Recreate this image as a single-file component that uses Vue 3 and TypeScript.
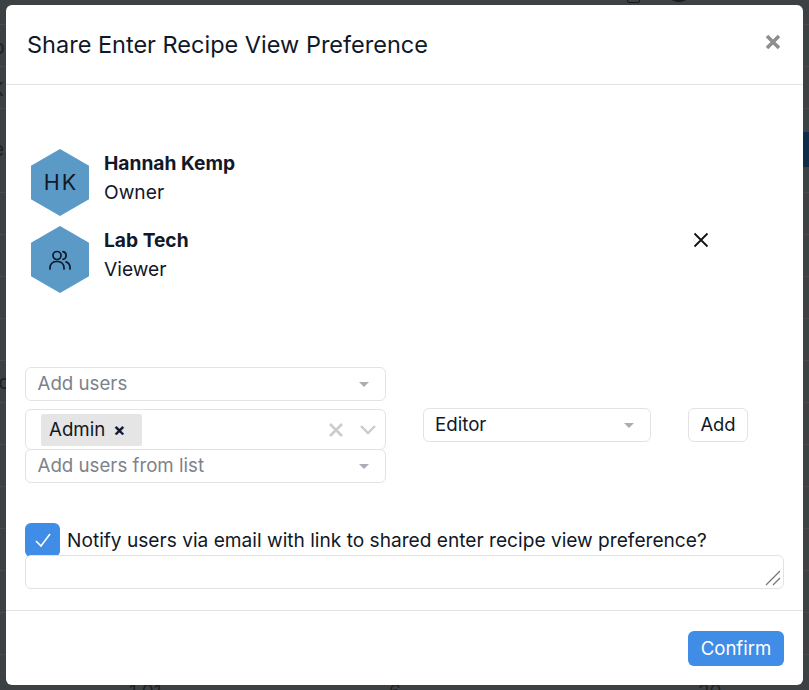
<script setup lang="ts">
interface Member {
  name: string
  role: string
  initials?: string
  removable?: boolean
}

const members: Member[] = [
  { name: 'Hannah Kemp', role: 'Owner', initials: 'HK' },
  { name: 'Lab Tech', role: 'Viewer', removable: true },
]
</script>

<template>
  <div class="backdrop">
    <!-- what shows of the page behind the overlay -->
    <div class="behind">
      <span class="frag f-b">b</span>
      <span class="frag f-k">K</span>
      <span class="frag f-e">e</span>
      <span class="frag f-ic">ic</span>
      <span class="frag f-101">1.01</span>
      <span class="frag f-6">6</span>
      <span class="frag f-20">20</span>
      <i class="top-icon"></i>
      <i class="top-blob"></i>
      <i class="blue-row"></i>
    </div>

    <div class="modal">
      <header class="modal-head">
        <h2>Share Enter Recipe View Preference</h2>
        <button class="close" aria-label="Close">
          <svg viewBox="0 0 16 16" width="16" height="16"><path d="M2 2 14 14M14 2 2 14" /></svg>
        </button>
      </header>

      <section class="modal-body">
        <ul class="members">
          <li v-for="m in members" :key="m.name" class="member">
            <div class="hex">
              <span v-if="m.initials" class="initials">{{ m.initials }}</span>
              <svg v-else viewBox="0 0 24 24" width="24" height="24" class="group-icon">
                <circle cx="9" cy="7.5" r="4" />
                <path d="M2 21v-1.5a6 6 0 0 1 6-6h2a6 6 0 0 1 6 6V21" />
                <path d="M15 3.6a4 4 0 0 1 0 7.8" />
                <path d="M22 21v-1.5a6 6 0 0 0-4-5.6" />
              </svg>
            </div>
            <div class="who">
              <strong>{{ m.name }}</strong>
              <span>{{ m.role }}</span>
            </div>
            <button v-if="m.removable" class="remove" aria-label="Remove">
              <svg viewBox="0 0 16 16" width="16" height="16"><path d="M1.5 1.5 14.5 14.5M14.5 1.5 1.5 14.5" /></svg>
            </button>
          </li>
        </ul>

        <div class="add-row">
          <div class="pickers">
            <div class="select placeholder">Add users<i class="caret"></i></div>
            <div class="select multi">
              <span class="tag">Admin<b>×</b></span>
              <svg class="clear" viewBox="0 0 16 16" width="16" height="16"><path d="M2 2 14 14M14 2 2 14" /></svg>
              <svg class="chev" viewBox="0 0 18 12" width="18" height="12"><path d="M2 2 9 9 16 2" /></svg>
            </div>
            <div class="select placeholder last">Add users from list<i class="caret"></i></div>
          </div>
          <div class="select role">Editor<i class="caret"></i></div>
          <button class="btn-add">Add</button>
        </div>

        <label class="notify">
          <span class="check">
            <svg viewBox="0 0 18 18" width="18" height="18"><path d="M2 10 7 15 16 3" /></svg>
          </span>
          Notify users via email with link to shared enter recipe view preference?
        </label>
        <div class="message-wrap">
          <textarea class="message"></textarea>
          <svg class="grip" viewBox="0 0 16 16" width="16" height="16"><path d="M1 15 15 1M8 15 15 8" /></svg>
        </div>
      </section>

      <footer class="modal-foot">
        <button class="btn-confirm">Confirm</button>
      </footer>
    </div>
  </div>
</template>

<style>
html, body { margin: 0; background: #3c4144; }
</style>

<style scoped>
.backdrop {
  position: relative;
  width: 809px;
  height: 690px;
  box-sizing: border-box;
  padding: 5px 6px 5px 5.5px;
  overflow: hidden;
  background: #3c4144;
  font-family: Inter, "Liberation Sans", sans-serif;
  color: #111827;
}
.behind {
  position: absolute;
  inset: 0;
  background: repeating-linear-gradient(180deg, transparent 0 24px, #474b4e 24px 25px, transparent 25px 42px);
}
.frag { position: absolute; font-size: 19px; line-height: 24px; color: #1d2124; }
.f-b { left: -7px; top: 36px; }
.f-k { left: -9px; top: 78px; }
.f-e { left: -7px; top: 138px; }
.f-ic { left: -6px; top: 371px; }
.f-101 { left: 129px; top: 680px; }
.f-6 { left: 389px; top: 680px; }
.f-20 { left: 698px; top: 680px; }
.top-icon {
  position: absolute;
  left: 627px;
  top: -8px;
  width: 11px;
  height: 9px;
  border: 1px solid #15181a;
  border-radius: 2px;
}
.top-blob {
  position: absolute;
  left: 671px;
  top: -6px;
  width: 16px;
  height: 8px;
  border-radius: 50%;
  background: #1f1c1d;
}
.blue-row {
  position: absolute;
  right: 0;
  top: 132px;
  width: 8px;
  height: 35px;
  background: #0f2c4a;
}
.modal {
  position: relative;
  height: 680px;
  display: flex;
  flex-direction: column;
  background: #fff;
  border-radius: 6px;
}
.modal-head {
  height: 79px;
  flex: none;
  display: flex;
  align-items: center;
  justify-content: space-between;
  padding: 0 22px 0 21.5px;
  border-bottom: 1px solid #e2e3e5;
}
h2 { margin: 0; font-size: 23.5px; font-weight: 400; }
button { font-family: inherit; padding: 0; border: 0; background: none; }
.close { display: flex; color: #8e8e8e; margin: -6px 0 0; }
.close path { stroke: currentColor; stroke-width: 3.6; fill: none; }
.modal-body {
  flex: 1;
  padding: 0 19px 0 19.5px;
  display: flex;
  flex-direction: column;
}
.members { list-style: none; margin: 64px 0 0; padding: 0 0 0 6px; display: flex; flex-direction: column; gap: 10px; }
.member { display: flex; align-items: center; height: 67px; position: relative; }
.hex {
  width: 58px;
  height: 67px;
  flex: none;
  background: #5b9ac7;
  clip-path: polygon(50% 0, 100% 25%, 100% 75%, 50% 100%, 0 75%, 0 25%);
  display: flex;
  align-items: center;
  justify-content: center;
}
.initials { font-size: 21.5px; letter-spacing: 2px; margin: -2px 0 0 2px; }
.group-icon * { fill: none; stroke: #111827; stroke-width: 1.7; stroke-linecap: round; }
.who { margin: -9px 0 0 15px; display: flex; flex-direction: column; gap: 8px; font-size: 19.2px; line-height: 21px; }
.who strong { font-weight: 700; }
.remove { position: absolute; left: 662px; top: 6px; display: flex; }
.remove path { stroke: #111; stroke-width: 1.8; fill: none; }
.add-row { display: flex; margin-top: 74px; align-items: flex-start; }
.pickers { width: 361px; flex: none; display: flex; flex-direction: column; }
.select {
  box-sizing: border-box;
  height: 34px;
  border: 1px solid #e2e3e6;
  border-radius: 6px;
  display: flex;
  align-items: center;
  padding: 0 15px 2px 11.5px;
  font-size: 18.7px;
  position: relative;
}
.placeholder { color: #7d828c; margin-bottom: 8px; }
.placeholder.last { margin: -1px 0 0; }
.caret {
  width: 0; height: 0; margin: 2px 1px 0 auto;
  border-left: 5.5px solid transparent;
  border-right: 5.5px solid transparent;
  border-top: 5px solid #a9adb5;
}
.multi { height: 41px; padding: 0 15px; }
.tag {
  background: #e5e5e5;
  height: 32px;
  width: 101px;
  box-sizing: border-box;
  border-radius: 2px;
  padding: 0 0 0 8px;
  display: flex;
  align-items: center;
  color: #111827;
}
.tag b { margin-left: 8px; font-weight: 700; font-size: 18px; }
.clear { margin-left: auto; margin-right: 15px; }
.clear path { stroke: #ccc; stroke-width: 2.6; fill: none; }
.chev { margin-right: -7px; }
.chev path { stroke: #ccc; stroke-width: 2.4; fill: none; }
.role { width: 228px; margin: 41px 0 0 37px; padding-left: 11px; color: #111827; }
.btn-add {
  box-sizing: border-box;
  width: 60px;
  height: 34px;
  margin: 41px 0 0 37px;
  padding-bottom: 2px;
  border: 1px solid #e2e3e6;
  border-radius: 6px;
  font-size: 18.4px;
  color: #111827;
}
.notify { display: flex; align-items: center; gap: 7px; margin-top: 40px; font-size: 19.14px; height: 34px; }
.check {
  width: 35px; height: 34px; flex: none;
  background: #3f8de6;
  border-radius: 6px;
  display: flex;
  align-items: center;
  justify-content: center;
}
.check path { stroke: #fff; stroke-width: 1.6; fill: none; }
.message-wrap { position: relative; margin-top: -2px; }
.message {
  display: block;
  box-sizing: border-box;
  width: 100%;
  height: 34px;
  border: 1px solid #e2e3e6;
  border-radius: 6px;
  background: #fff;
  resize: none;
}
.grip { position: absolute; right: 3px; bottom: 3px; }
.grip path { stroke: #777; stroke-width: 1.3; fill: none; }
.modal-foot {
  height: 75px;
  flex: none;
  box-sizing: border-box;
  border-top: 1px solid #e2e3e5;
  display: flex;
  align-items: flex-start;
  justify-content: flex-end;
  padding: 20px 19px 0 0;
}
.btn-confirm {
  width: 96px;
  height: 35px;
  padding-bottom: 2px;
  background: #3f8de6;
  color: #fff;
  border-radius: 6px;
  font-size: 18.6px;
}
</style>
